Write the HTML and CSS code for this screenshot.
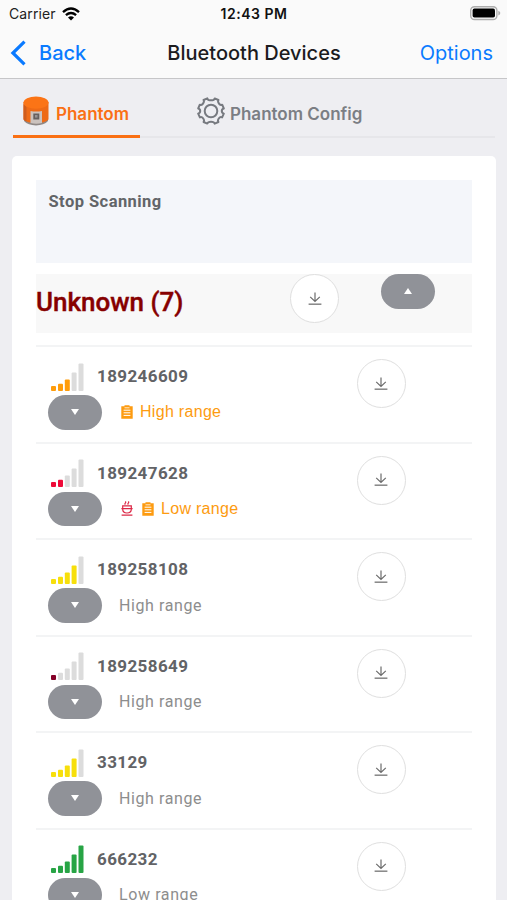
FILE: index.html
```html
<!DOCTYPE html>
<html lang="en">
<head>
    <meta charset="UTF-8">
    <meta name="viewport" content="width=device-width, initial-scale=1.0">
    <title>Bluetooth Devices</title>
    <link rel="stylesheet" href="styles.css">
</head>
<body>
    <!-- shared icons -->
    <svg class="icon-defs" width="0" height="0">
        <symbol id="download" viewBox="0 0 14 14">
            <path d="M7 .6v8.6M2.2 4.9L7 9.4l4.8-4.5" fill="none" stroke="#6c6c6c" stroke-width="1.2"/>
            <path d="M.6 12.2h12.8" stroke="#858585" stroke-width="1.5"/>
        </symbol>
        <symbol id="signal" viewBox="0 0 33 28">
            <rect class="b1" x="0" y="23" width="5" height="5" rx="1"/>
            <rect class="b2" x="7" y="20.7" width="5" height="7.3" rx="1"/>
            <rect class="b3" x="13.8" y="16.5" width="5" height="11.5" rx="1"/>
            <rect class="b4" x="20.6" y="9.5" width="5" height="18.5" rx="1"/>
            <rect class="b5" x="27.5" y="0.5" width="5" height="27.5" rx="1"/>
        </symbol>
        <symbol id="clipboard" viewBox="0 0 12 14">
            <path d="M.3 1.3h3.2V.3h5v1h3.2v12.4H.3z" fill="#fd9b10"/>
            <path d="M2.6 5.2h6.8M2.6 7.8h6.8M2.6 10.4h6.8" stroke="#fff" stroke-width="1"/>
            <path d="M3.5 2.8h5" stroke="#fff" stroke-width=".8"/>
        </symbol>
        <symbol id="cup" viewBox="0 0 12 15">
            <g fill="none" stroke="#dc2846" stroke-width="1.2">
                <path d="M4.3 3.6q-.8-.8 0-1.5t0-1.6M7.3 3.6q-.8-.8 0-1.5t0-1.6"/>
                <path d="M1.7 4.8h8.6v3.5Q10.3 12 6 12T1.7 8.3zM.4 7.6h11.2M.6 14.2h10.8"/>
            </g>
        </symbol>
    </svg>

    <header class="header">
        <div class="status-bar">
            <div class="carrier">
                <span>Carrier</span>
                <svg width="18" height="14" viewBox="0 0 18 14">
                    <g fill="none" stroke="#000" stroke-width="2.4">
                        <path d="M1 5.1Q9-2 17 5.1"/>
                        <path d="M3.9 8.2q5.1-4.3 10.2 0"/>
                    </g>
                    <path d="M6 10.5q3-2.4 6 0l-3 3.1z"/>
                </svg>
            </div>
            <div class="clock">12:43 PM</div>
            <svg class="battery" width="31" height="15" viewBox="0 0 31 15">
                <rect x=".7" y=".7" width="26.2" height="12.8" rx="3.8" fill="#fafafa" stroke="#adadad" stroke-width="1.4"/>
                <rect x="2.6" y="2.6" width="22.4" height="9" rx="1.8"/>
                <path d="M28.3 4.7q2 .8 2 2.4t-2 2.4z" fill="#adadad"/>
            </svg>
        </div>
        <nav class="navbar">
            <a href="#" class="back">
                <svg width="16" height="26" viewBox="0 0 16 26">
                    <path d="M14.5 1.7L2.9 13l11.6 11.3" fill="none" stroke="#0a7aff" stroke-width="3.2"/>
                </svg>
                <span>Back</span>
            </a>
            <h1>Bluetooth Devices</h1>
            <a href="#" class="options">Options</a>
        </nav>
    </header>

    <div class="tabs">
        <a href="#" class="tab active">
            <svg width="26" height="30" viewBox="0 0 26 30">
                <path d="M1 21v4q4 4.4 12 4.4T25 25v-4z" fill="#8f8886"/>
                <path d="M.5 6v17.5Q4 27 13 27t12.5-3.5V6z" fill="#ee6a16"/>
                <path d="M.5 8v15.5q1 1.2 3 2V11z" fill="#cf5c1c"/>
                <ellipse cx="13" cy="6.6" rx="12.5" ry="6.2" fill="#fb7416"/>
                <path d="M7.5 15q5.5 1 11.5 0v12q-5.7 1.4-11.5 0z" fill="#cbc2be"/>
                <path d="M10.3 17.5h6v6h-6z" fill="#66605f"/>
                <path d="M12 19h2.5v2.6H12z" fill="#989293"/>
            </svg>
            <span>Phantom</span>
        </a>
        <a href="#" class="tab config">
            <svg width="28" height="28" viewBox="0 0 28 28">
                <g fill="none" stroke="#777a80" stroke-width="2" stroke-linejoin="round">
                    <path d="M10.3 1.4C11 4 17 4 17.7 1.4L21.4 3C20.1 5.4 23.3 9 25.2 7.7L26.8 11.5C24.1 12.2 24.1 16 26.8 16.7L25.1 20.4C22.8 19.2 20 22.4 21.4 25L17.7 26.6C17 24 11 24 10.3 26.6L6.6 25C8 22.4 5.2 19.2 2.9 20.4L1.2 16.7C3.9 16 3.9 12.2 1.2 11.5L2.8 7.7C4.7 9 7.9 5.4 6.6 3Z"/>
                    <circle cx="14" cy="14" r="6.3"/>
                </g>
            </svg>
            <span>Phantom Config</span>
        </a>
    </div>

    <main class="card">
        <div class="scan-box">Stop Scanning</div>

        <div class="group">
            <h2>Unknown (7)</h2>
            <button class="btn-download"><svg><use href="#download"/></svg></button>
            <button class="btn-toggle up"></button>
        </div>

        <div class="device">
            <div class="info">
                <div class="name"><svg class="signal orange"><use href="#signal"/></svg>189246609</div>
                <div class="detail warn">
                    <button class="btn-toggle"></button>
                    <svg class="clipboard"><use href="#clipboard"/></svg>
                    <span>High range</span>
                </div>
            </div>
            <button class="btn-download"><svg><use href="#download"/></svg></button>
        </div>

        <div class="device">
            <div class="info">
                <div class="name"><svg class="signal red"><use href="#signal"/></svg>189247628</div>
                <div class="detail warn">
                    <button class="btn-toggle"></button>
                    <svg class="cup"><use href="#cup"/></svg>
                    <svg class="clipboard"><use href="#clipboard"/></svg>
                    <span>Low range</span>
                </div>
            </div>
            <button class="btn-download"><svg><use href="#download"/></svg></button>
        </div>

        <div class="device">
            <div class="info">
                <div class="name"><svg class="signal yellow"><use href="#signal"/></svg>189258108</div>
                <div class="detail">
                    <button class="btn-toggle"></button>
                    <span>High range</span>
                </div>
            </div>
            <button class="btn-download"><svg><use href="#download"/></svg></button>
        </div>

        <div class="device">
            <div class="info">
                <div class="name"><svg class="signal maroon"><use href="#signal"/></svg>189258649</div>
                <div class="detail">
                    <button class="btn-toggle"></button>
                    <span>High range</span>
                </div>
            </div>
            <button class="btn-download"><svg><use href="#download"/></svg></button>
        </div>

        <div class="device">
            <div class="info">
                <div class="name"><svg class="signal yellow"><use href="#signal"/></svg>33129</div>
                <div class="detail">
                    <button class="btn-toggle"></button>
                    <span>High range</span>
                </div>
            </div>
            <button class="btn-download"><svg><use href="#download"/></svg></button>
        </div>

        <div class="device">
            <div class="info">
                <div class="name"><svg class="signal green"><use href="#signal"/></svg>666232</div>
                <div class="detail">
                    <button class="btn-toggle"></button>
                    <span>Low range</span>
                </div>
            </div>
            <button class="btn-download"><svg><use href="#download"/></svg></button>
        </div>
    </main>
</body>
</html>
```

FILE: styles.css
```css
* {
    margin: 0;
    padding: 0;
    box-sizing: border-box;
}

html, body {
    height: 900px;
    overflow: hidden;
}

body {
    background-color: #eeeef2;
    font-family: Roboto, Arial, sans-serif;
}

a {
    text-decoration: none;
}

svg {
    display: block;
    flex-shrink: 0;
}

.icon-defs {
    display: none;
}

/* header */
.header {
    height: 79px;
    background-color: #fafafa;
    border-bottom: 1px solid #c6c6c8;
    font-family: Inter, sans-serif;
}

.status-bar {
    height: 27px;
    display: grid;
    grid-template-columns: 1fr auto 1fr;
    align-items: center;
    padding: 0 6px 0 9px;
    font-size: 14px;
    color: #222;
}

.carrier {
    display: flex;
    align-items: center;
    gap: 6px;
    letter-spacing: 0.1px;
}

.clock {
    font-weight: 600;
    letter-spacing: 0.5px;
    margin-right: 2px;
    color: #111;
}

.battery {
    justify-self: end;
}

.navbar {
    height: 51px;
    display: grid;
    grid-template-columns: 1fr auto 1fr;
    align-items: center;
    padding: 0 14px 0 10px;
    font-size: 20px;
}

.navbar a {
    color: #0a7aff;
}

.navbar h1 {
    font-size: 20px;
    font-weight: 500;
    padding-left: 5px;
    color: #1c1c1e;
}

.back {
    display: flex;
    align-items: center;
    gap: 13px;
    font-weight: 500;
}

.options {
    justify-self: end;
}

/* tabs */
.tabs {
    display: flex;
    height: 59px;
    margin: 0 12px 18px 13px;
    border-bottom: 2px solid #e6e6ea;
}

.tab {
    height: 59px;
    display: flex;
    align-items: center;
    font-family: Inter, sans-serif;
    font-size: 17px;
    font-weight: 600;
    color: #7b7e84;
}

.tab span {
    padding-top: 10px;
}

.tab.active {
    width: 127px;
    padding-left: 10px;
    gap: 7px;
    color: #fa7014;
    border-bottom: 3px solid #fa7014;
}

.tab.active span {
    padding-top: 13px;
}

.tab svg {
    margin-top: 8px;
}

.config {
    margin-left: 57px;
    gap: 5px;
}

.config svg {
    margin-top: 5px;
}

/* device list */
.card {
    width: 484px;
    height: 780px;
    margin-left: 12px;
    padding: 24px 24px 0;
    background-color: #fff;
    border-radius: 5px;
}

.scan-box {
    width: 436px;
    height: 83px;
    padding: 12px 12.5px;
    background-color: #f4f6fa;
    color: #626568;
    font-size: 16.5px;
    font-weight: 700;
    line-height: 20px;
    letter-spacing: 0.45px;
}

.group {
    height: 59px;
    margin: 11px 0 12px;
    display: flex;
    align-items: flex-start;
    background-color: #f8f8f8;
}

.group h2 {
    width: 254px;
    font-size: 26px;
    font-weight: 500;
    line-height: 57px;
    color: #860000;
    -webkit-text-stroke: 0.4px #860000;
}

.group .btn-toggle {
    margin-left: 42px;
}

.btn-download {
    width: 49px;
    height: 49px;
    display: flex;
    align-items: center;
    justify-content: center;
    background-color: #fff;
    border: 1.5px solid #dfdfdf;
    border-radius: 50%;
}

.btn-download svg {
    width: 14px;
    height: 14px;
}

.btn-toggle {
    width: 54px;
    height: 34.5px;
    flex-shrink: 0;
    display: flex;
    align-items: center;
    justify-content: center;
    background-color: #909298;
    border: none;
    border-radius: 18px;
}

.btn-toggle::before {
    content: "";
    border: 4.5px solid transparent;
    border-top: 6px solid #fff;
    border-bottom: 0;
}

.btn-toggle.up::before {
    border-top: 0;
    border-bottom: 6px solid #fff;
}

.device {
    height: 96.5px;
    display: flex;
    padding: 12px 12.5px 0 12px;
    border-top: 2px solid #f3f4f5;
}

.info {
    width: 308.5px;
}

.name {
    height: 36px;
    display: flex;
    color: #626366;
    font-size: 17px;
    font-weight: 700;
    line-height: 34px;
    letter-spacing: 0.4px;
}

.signal {
    width: 33px;
    height: 28px;
    margin: 3.5px 13.5px 0 2.5px;
}

.detail {
    display: flex;
    align-items: center;
    color: #8d8d8d;
    font-size: 16px;
    letter-spacing: 0.6px;
}

.detail span {
    margin-left: 17px;
}

.warn {
    color: #fd9b10;
    font-family: "Liberation Sans", Arial, sans-serif;
    letter-spacing: 0.3px;
}

.warn span {
    margin-left: 7px;
}

.clipboard {
    width: 12px;
    height: 14px;
    margin-left: 19px;
}

.cup {
    width: 12px;
    height: 15px;
    margin-left: 19px;
}

.cup + .clipboard {
    margin-left: 9px;
}

/* signal levels, each bar picks its own colour */
.b1 { fill: var(--s1, #dcdcdc); }
.b2 { fill: var(--s2, #dcdcdc); }
.b3 { fill: var(--s3, #dcdcdc); }
.b4 { fill: var(--s4, #dcdcdc); }
.b5 { fill: var(--s5, #dcdcdc); }

.orange {
    --s1: #ff9c0a;
    --s2: #ff9c0a;
    --s3: #ff9c0a;
}

.red {
    --s1: #ee0a38;
    --s2: #ee0a38;
}

.yellow {
    --s1: #f7df0b;
    --s2: #f7df0b;
    --s3: #f7df0b;
    --s4: #f7df0b;
}

.maroon {
    --s1: #850028;
}

.green {
    --s1: #27a445;
    --s2: #27a445;
    --s3: #27a445;
    --s4: #27a445;
    --s5: #27a445;
}
```
